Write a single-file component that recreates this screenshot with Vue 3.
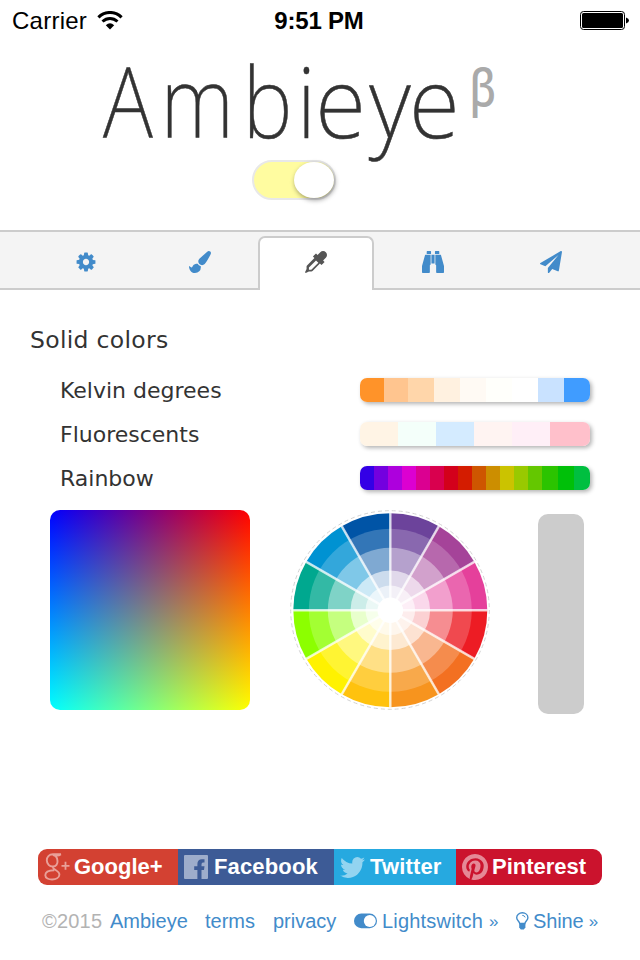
<script setup>
const tabs = [
  { name: 'settings', paths: ['M1152 896q0-106-75-181t-181-75-181 75-75 181 75 181 181 75 181-75 75-181zm512-109v222q0 12-8 23t-20 13l-185 28q-19 54-39 91 35 50 107 138 10 12 10 25t-9 23q-27 37-99 108t-94 71q-12 0-26-9l-138-108q-44 23-91 38-16 136-29 186-7 28-36 28h-222q-14 0-24.5-8.500t-11.500-21.500l-28-184q-49-16-90-37l-141 107q-10 9-25 9-14 0-25-11-126-114-165-168-7-10-7-23 0-12 8-23 15-21 51-66.500t54-70.500q-27-50-41-99l-183-27q-13-2-21-12.500t-8-23.500v-222q0-12 8-23t19-13l186-28q14-46 39-92-40-57-107-138-10-12-10-24 0-10 9-23 26-36 98.500-107.500t94.500-71.500q13 0 26 10l138 107q44-23 91-38 16-136 29-186 7-28 36-28h222q14 0 24.500 8.500t11.500 21.500l28 184q49 16 90 37l142-107q9-9 24-9 13 0 25 10 129 119 165 170 7 8 7 22 0 12-8 23-15 21-51 66.500t-54 70.500q26 50 41 98l183 28q13 2 21 12.500t8 23.500z'] },
  { name: 'brush', paths: ['M1615 0q70 0 122.500 46.500t52.500 116.500q0 63-45 151-332 629-465 752-97 91-218 91-126 0-216.500-92.500t-90.500-219.500q0-128 92-212l638-579q59-54 130-54zm-909 1034q39 76 106.500 130t150.500 76l1 71q4 213-129.500 347t-348.500 134q-123 0-218-46.500t-152.500-127.500-86.500-183-29-220q7 5 41 30t62 44.500 59 36.500 46 17q41 0 55-37 25-66 57.500-112.500t69.500-76 88-47.500 103-25.500 125-10.500z'] },
  { name: 'picker', active: true, paths: ['M1698 94q94 94 94 226.500t-94 225.500l-225 223 104 104q10 10 10 23t-10 23l-210 210q-10 10-23 10t-23-10l-105-105-603 603q-37 37-90 37h-203l-256 128-64-64 128-256v-203q0-53 37-90l603-603-105-105q-10-10-10-23t10-23l210-210q10-10 23-10t23 10l104 104 223-225q93-94 225.500-94t226.500 94zm-1186 1442l576-576-192-192-576 576v192h192z'] },
  { name: 'discover', paths: ['M704 300v788q0 64-64 64v576q0 64-64 64H64q-64 0-64-64v-512L249 323q7-23 31-23zM1024 300v724H768V300zM1792 1216v512q0 64-64 64h-512q-64 0-64-64v-576q-64 0-64-64V300h424q24 0 31 23zM736 32v220H384V32q0-32 32-32h288q32 0 32 32zM1408 32v220h-352V32q0-32 32-32h288q32 0 32 32z'] },
  { name: 'share', paths: ['M1764 11q33 24 27 64l-256 1536q-5 29-32 45-14 8-31 8-11 0-24-5l-453-185-242 295q-18 23-49 23-13 0-22-4-19-7-30.500-23.500t-11.500-36.500v-349l864-1059-1069 925-395-162q-37-14-40-55-2-40 32-59l1664-960q15-9 32-9 20 0 36 11z'] },
]

const palettes = [
  { label: 'Kelvin degrees', cells: [['#ff9329', 24], ['#ffc58f', 24], ['#ffd6aa', 26], ['#fff1e0', 26], ['#fffaf4', 26], ['#fffffb', 26], ['#ffffff', 26], ['#c9e2ff', 26], ['#409cff', 26]] },
  { label: 'Fluorescents', cells: [['#fff4e5', 38], ['#f4fffa', 38], ['#d4ebff', 38], ['#fff4f2', 38], ['#ffeff7', 38], ['#ffc0cb', 40]] },
  { label: 'Rainbow', cells: [['#3300e6', 14], ['#7300df', 14], ['#ad00dd', 14], ['#dc00d1', 14], ['#db0091', 14], ['#d9004e', 14], ['#d3001b', 14], ['#d41c00', 14], ['#ce5600', 14], ['#cc8e00', 14], ['#cbc300', 14], ['#99c900', 14], ['#64c700', 14], ['#2bc400', 16], ['#00c009', 16], ['#00bf40', 16]] },
]

const hues = ['#6c439b', '#a54399', '#e5409b', '#ed1c24', '#f37021', '#f7941e', '#ffc20e', '#fff200', '#8cff00', '#00a88f', '#0092d2', '#0054a6']
const point = (i, r) => {
  const a = (i * Math.PI) / 6
  return `${(100.3 + r * Math.sin(a)).toFixed(2)} ${(100.3 - r * Math.cos(a)).toFixed(2)}`
}
const wedges = hues.map((fill, i) => ({ fill, d: `M100.3 100.3L${point(i, 97)}A97 97 0 0 1 ${point(i + 1, 97)}Z` }))
const spokes = hues.map((_, i) => `M100.3 100.3L${point(i, 97.5)}`).join('')
const tints = [[81.5, 0.2], [62.5, 0.375], [39.8, 0.6], [24.8, 0.6], [12.8, 1]]
</script>

<template>
  <div class="screen">
    <div class="status">
      <div class="carrier">
        <span>Carrier</span>
        <svg width="26" height="20" viewBox="0 0 26 20" fill="none" stroke="#000">
          <path d="M1.400 6.300C8-.1 18-.1 24.600 6.300" stroke-width="3.100" />
          <path d="M5.500 10.500C10 6.400 16 6.400 20.500 10.500" stroke-width="3" />
          <path d="M8.800 14.200Q13 10.400 17.200 14.200L13 18.500Z" fill="#000" stroke="none" />
        </svg>
      </div>
      <strong>9:51 PM</strong>
      <svg class="battery" width="50" height="20" viewBox="0 0 50 20">
        <rect x=".5" y=".5" width="44" height="18" rx="3" fill="none" stroke="#000" />
        <rect x="2" y="2" width="41" height="15" rx="1.500" />
        <path d="M46 6.500q3 .8 3 3t-3 3z" />
      </svg>
    </div>

    <header>
      <svg class="logo" width="440" height="130" viewBox="0 0 440 130">
        <text class="word" transform="scale(.87 1)" y="91.500" x="3.500 69.500 164 226.700">Ambi</text>
        <text class="word" transform="scale(.96 1)" y="91.500" x="224.200 280.500 322">eye</text>
        <text class="beta" transform="scale(.87 1)" y="60" x="424.500">β</text>
      </svg>
      <div class="switch"><div class="knob"></div></div>
    </header>

    <nav>
      <a v-for="tab in tabs" :key="tab.name" :class="{ active: tab.active }">
        <svg width="22" height="22" viewBox="0 0 1792 1792"><path v-for="d in tab.paths" :key="d" :d="d" /></svg>
      </a>
    </nav>

    <main>
      <h2>Solid colors</h2>
      <div v-for="p in palettes" :key="p.label" class="row">
        <span>{{ p.label }}</span>
        <div class="bar">
          <i v-for="[color, width] in p.cells" :key="color" :style="{ background: color, width: width + 'px' }"></i>
        </div>
      </div>
      <div class="pickers">
        <div class="square"></div>
        <svg class="wheel" width="200" height="200" viewBox="0 0 200 200">
          <circle cx="100" cy="100" r="99.300" fill="none" stroke="#d3d3d3" stroke-dasharray="4 3" />
          <path v-for="w in wedges" :key="w.fill" :d="w.d" :fill="w.fill" />
          <circle v-for="[r, o] in tints" :key="r" cx="100.300" cy="100.300" :r="r" fill="#fff" :fill-opacity="o" />
          <path :d="spokes" stroke="#fff" stroke-opacity=".75" stroke-width="2.500" />
        </svg>
        <div class="preview"></div>
      </div>
    </main>

    <footer>
      <div class="social">
        <a class="google">
          <svg width="26" height="28" viewBox="0 0 26 28" fill="none" stroke="currentColor">
            <path d="M17 1.300H9C5 1.300 2.800 4 2.800 7.300C2.800 11 5.600 13.800 9 13.500C12 13.300 13.800 11 13.500 8C13.300 5 11.800 2.300 9 2M12 2.600Q15 2.800 17 1.300M9.500 13.600C7 16.500 15.800 17.300 15.400 21.800C15 28 1.300 28 1.300 22.200C1.300 18.600 5.500 17.300 10.300 17.200" stroke-width="1.900" />
            <path d="M17.500 12.800h8M21.500 8.800v8" stroke-width="1.800" />
          </svg>
          <span>Google+</span>
        </a>
        <a class="facebook">
          <svg width="24" height="24" viewBox="0 0 24 24" fill="currentColor">
            <path d="M1 0H23Q24 0 24 1V23Q24 24 23 24H17.500V15H20L20.500 11.200H17.500V9.500Q17.500 7.600 19 7.600H20.500V4.200H18Q13.400 4.200 13.400 9V11.200H10.200V15H13.400V24H1Q0 24 0 23V1Q0 0 1 0Z" />
          </svg>
          <span>Facebook</span>
        </a>
        <a class="twitter">
          <svg width="25" height="21" viewBox="108 256 1576 1280" preserveAspectRatio="none" fill="currentColor">
            <path d="M1684 408q-67 98-162 167 1 14 1 42 0 130-38 259.500t-115.500 248.500-184.500 210.500-258 146-323 54.500q-271 0-496-145 35 4 78 4 225 0 401-138-105-2-188-64.500t-114-159.500q33 5 61 5 43 0 85-11-112-23-185.500-111.500t-73.500-205.500v-4q68 38 146 41-66-44-105-115t-39-154q0-88 44-163 121 149 294.500 238.500t371.500 99.500q-8-38-8-74 0-134 94.500-228.500t228.500-94.500q140 0 236 102 109-21 205-78-37 115-142 178 93-10 186-50z" />
          </svg>
          <span>Twitter</span>
        </a>
        <a class="pinterest">
          <svg width="26" height="26" viewBox="128 128 1536 1536" fill="currentColor">
            <path d="M1664 896q0 209-103 385.500t-279.500 279.500-385.500 103q-111 0-218-32 59-93 78-164 9-34 54-211 20 39 73 67.500t114 28.500q121 0 216-68.500t147-188.500 52-270q0-114-59.500-214t-172.500-163-255-63q-105 0-196 29t-154.500 77-109 110.500-67 129.500-21.500 134q0 104 40 183t117 111q30 12 38-20 2-7 8-31t8-30q6-23-11-43-51-61-51-151 0-151 104.500-259.500t273.500-108.500q151 0 235.500 82t84.500 213q0 170-68.500 289t-175.500 119q-61 0-98-43.500t-23-104.500q8-35 26.500-93.500t30-103 11.500-75.500q0-50-27-83t-77-33q-62 0-105 57t-43 142q0 73 25 122l-99 418q-17 70-13 177-206-91-333-281t-127-423q0-209 103-385.500t279.500-279.500 385.500-103 385.500 103 279.500 279.500 103 385.500z" />
          </svg>
          <span>Pinterest</span>
        </a>
      </div>
      <div class="links">
        <span class="copy">©2015</span>
        <a class="home">Ambieye</a>
        <a class="terms">terms</a>
        <a class="privacy">privacy</a>
        <a class="light">
          <svg width="24" height="16" viewBox="0 0 24 16">
            <rect x="0" y=".6" width="23" height="14.600" rx="7.300" fill="#428bca" />
            <circle cx="15.800" cy="7.900" r="6" fill="#fff" />
          </svg>
          <span>Lightswitch <small>»</small></span>
        </a>
        <a class="shine">
          <svg width="13" height="18" viewBox="0 0 13 18" fill="none" stroke="#428bca">
            <path d="M3.700 11.500C3.400 9.300.7 8.500.7 5.700C.7 2.800 3.200.8 6.300.8S11.900 2.800 11.900 5.700C11.900 8.500 9.200 9.300 8.900 11.500Z" stroke-width="1.400" />
            <path d="M6.300 3.400Q8.600 3.400 9.200 5.400" stroke-width="1" />
            <path d="M3.200 11.200H9.400V15.600L7.800 17.500H4.800L3.200 15.600Z" fill="#428bca" stroke="none" />
          </svg>
          <span>Shine <small>»</small></span>
        </a>
      </div>
    </footer>
  </div>
</template>

<style>
body { margin: 0; background: #fff; }
</style>

<style scoped>
.screen { width: 640px; height: 960px; box-sizing: border-box; display: flex; flex-direction: column; overflow: hidden; background: #fff; font-family: "Liberation Sans", Arial, sans-serif; color: #333; }
svg { display: block; flex: none; }
.status { height: 40px; box-sizing: border-box; display: grid; grid-template-columns: 1fr auto 1fr; align-items: center; padding: 2px 10px 0 12px; color: #000; font-size: 24px; line-height: 38px; letter-spacing: .25px; }
.status strong { letter-spacing: -.2px; margin-right: 4px; }
.carrier { display: flex; align-items: center; gap: 10px; }
.battery { justify-self: end; }
header { height: 190px; display: flex; flex-direction: column; align-items: center; }
.logo { margin: 6px 0 -16px; overflow: visible; }
.word { font-family: "Noto Sans", "Open Sans", sans-serif; font-weight: 200; font-size: 97px; fill: #333; stroke: #333; stroke-width: .5px; }
.beta { font-family: "Noto Sans", "Open Sans", sans-serif; font-weight: 500; font-size: 50px; fill: #aaa; }
.switch { width: 84px; height: 40px; box-sizing: border-box; border: 2px solid #e8e8e8; border-radius: 20px; background: #fffca0; display: flex; justify-content: flex-end; margin-right: 52px; }
.knob { width: 40px; height: 36px; border-radius: 50%; background: #fff; box-shadow: 1px 2px 5px rgba(0, 0, 0, .4); }
nav { height: 60px; flex: none; box-sizing: border-box; border-top: 2px solid #ccc; background: linear-gradient(#ccc, #ccc) bottom / 100% 2px no-repeat #f4f4f4; padding-left: 30px; display: grid; grid-template-columns: 112px 116px 116px 118px 118px; }
nav a { display: flex; justify-content: center; padding-top: 19px; fill: #428bca; }
nav a.active { margin-top: 4px; padding-top: 13px; border: 2px solid #ccc; border-bottom: 0; border-radius: 7px 7px 0 0; background: #fff; fill: #555; }
main { padding-left: 30px; font-family: "DejaVu Sans", Verdana, sans-serif; }
h2 { margin: 35px 0 13px; height: 30px; font-size: 23.500px; line-height: 30px; font-weight: 400; letter-spacing: .3px; }
.row { height: 44px; display: flex; align-items: center; justify-content: space-between; padding: 0 50px 0 30px; font-size: 22px; }
.row span { line-height: 30px; margin-top: 1px; }
.bar { display: flex; width: 230px; height: 24px; border-radius: 7px; overflow: hidden; box-shadow: 2px 2px 4px rgba(0, 0, 0, .3); }
.pickers { display: flex; align-items: flex-start; padding: 10px 0 0 20px; }
.square { width: 200px; height: 200px; border-radius: 10px; background: linear-gradient(to bottom, #000, #0f0), linear-gradient(to right, #00f, #f00); background-blend-mode: screen; }
.wheel { margin-left: 40px; }
.preview { width: 46px; height: 200px; margin: 4px 0 0 48px; border-radius: 10px; background: #ccc; }
footer { margin-top: auto; height: 111px; }
.social { width: 564px; height: 36px; margin-left: 38px; border-radius: 9px; overflow: hidden; display: grid; grid-template-columns: 140px 156px 122px 146px; font-size: 22px; font-weight: 700; }
.social a { display: flex; align-items: center; gap: 6px; padding-left: 6px; color: rgba(255, 255, 255, .5); white-space: nowrap; }
.social span { color: #fff; }
.social .google { background: #d34132; gap: 4px; }
.facebook { background: #3d5b96; letter-spacing: .15px; }
.twitter { background: #26a9e0; letter-spacing: .15px; }
.social .twitter { gap: 5px; }
.pinterest { background: #cb132d; }
.social .pinterest { gap: 4px; }
.links { display: flex; align-items: center; height: 24px; margin-top: 24px; padding-left: 42px; font-size: 20px; white-space: nowrap; }
.links a { color: #428bca; display: flex; align-items: center; }
.links small { font-size: 17px; vertical-align: 1px; line-height: 1; }
.copy { color: #b3b3b3; width: 68px; letter-spacing: .2px; }
.home { width: 95px; }
.terms { width: 68px; }
.privacy { width: 81px; }
.light { width: 162px; gap: 4px; }
.light span { letter-spacing: .2px; }
.shine { gap: 4px; }
.shine span { letter-spacing: -.15px; }
</style>
